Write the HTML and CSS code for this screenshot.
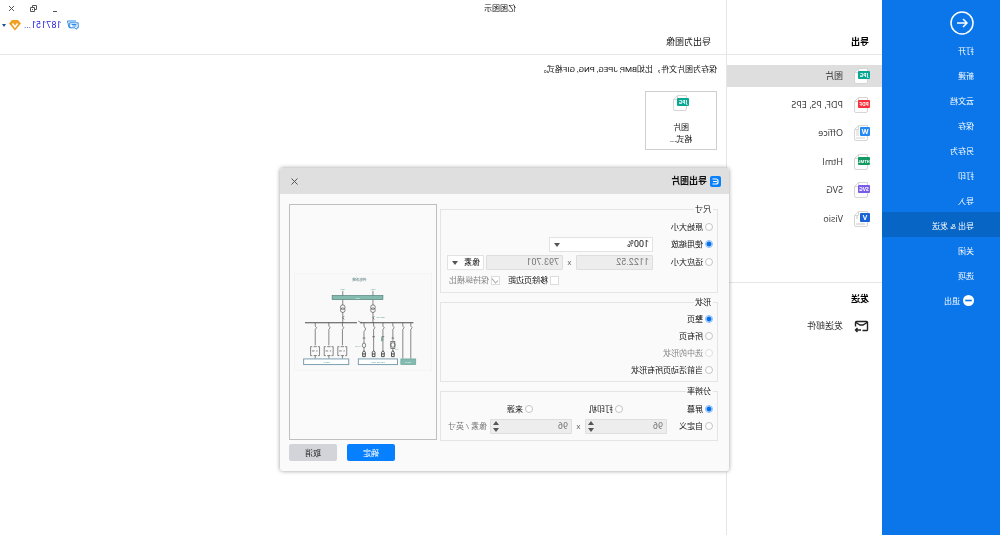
FILE: index.html
```html
<!DOCTYPE html>
<html lang="zh-CN">
<head>
<meta charset="utf-8">
<title>亿图图示</title>
<link rel="stylesheet" href="styles.css">
</head>
<body>
<svg class="defs" aria-hidden="true">
  <symbol id="page" viewBox="0 0 16 16">
    <path d="M2.500 .5h9l4 4v9.500a1.500 1.500 0 0 1-1.500 1.500H4a1.500 1.500 0 0 1-1.500-1.500z" fill="#fdfdfd" stroke="#d6d6d6"/>
    <path d="M11.500 .5v4h4" fill="none" stroke="#d6d6d6"/>
  </symbol>
</svg>
<div class="app">
  <nav class="sidebar">
    <button class="back" aria-label="返回"><svg viewBox="0 0 24 24"><circle cx="12" cy="12" r="11"/><path d="M17 12H7M11 8l-4 4 4 4"/></svg></button>
    <a class="menu" href="#">打开</a>
    <a class="menu" href="#">新建</a>
    <a class="menu" href="#">云文档</a>
    <a class="menu" href="#">保存</a>
    <a class="menu" href="#">另存为</a>
    <a class="menu" href="#">打印</a>
    <a class="menu" href="#">导入</a>
    <a class="menu current" href="#">导出 &amp; 发送</a>
    <a class="menu" href="#">关闭</a>
    <a class="menu" href="#">选项</a>
    <a class="menu" href="#"><svg class="exit" viewBox="0 0 10 10"><circle cx="5" cy="5" r="5" fill="#fff"/><path d="M2 5h6" stroke="#0a76ea" stroke-width="1.500"/></svg>退出</a>
  </nav>

  <section class="kinds">
    <h2 class="kinds-title">导出</h2>
    <div class="kind-list">
      <a class="kind selected" href="#"><svg viewBox="0 0 16 16"><use href="#page"/><rect y="3" width="12" height="8" rx="1" fill="#0aa793"/><text x="6" y="9">JPG</text></svg>图片</a>
      <a class="kind" href="#"><svg viewBox="0 0 16 16"><use href="#page"/><rect y="3" width="12" height="8" rx="1" fill="#fb2f38"/><text x="6" y="9">PDF</text></svg>PDF, PS, EPS</a>
      <a class="kind" href="#"><svg viewBox="0 0 16 16"><use href="#page"/><path d="M11 6h3M11 8h3M11 10h3M5 13h9" stroke="#d6d6d6"/><rect y="2" width="10" height="9" rx="1" fill="#2488f5"/><text class="big" x="5" y="9">W</text></svg>Office</a>
      <a class="kind" href="#"><svg viewBox="0 0 16 16"><use href="#page"/><rect y="3" width="12" height="8" rx="1" fill="#129a62"/><text class="tiny" x="6" y="9">HTML</text></svg>Html</a>
      <a class="kind" href="#"><svg viewBox="0 0 16 16"><use href="#page"/><rect y="3" width="12" height="8" rx="1" fill="#7a5bea"/><text x="6" y="9">SVG</text></svg>SVG</a>
      <a class="kind" href="#"><svg viewBox="0 0 16 16"><use href="#page"/><path d="M13 5v3M5 13h9" stroke="#c8c8c8"/><rect y="2" width="10" height="9" rx="1" fill="#1a62d6"/><text class="big" x="5" y="9">V</text></svg>Visio</a>
    </div>
    <h2 class="send-title">发送</h2>
    <a class="kind" href="#"><svg class="mail" viewBox="0 0 16 16"><path d="M7.500 12.500h-4a1 1 0 0 1-1-1v-7a1 1 0 0 1 1-1h10a1 1 0 0 1 1 1v4M3 4.500l4 2.500h3l4-2.500M9 12h5.500M12.500 10l2 2-2 2"/></svg>发送邮件</a>
  </section>

  <main class="main">
    <header class="main-head">
      <h1 class="main-title">导出为图像</h1>
      <div class="account">
        <svg class="chat" viewBox="0 0 12 10"><path d="M3 1h8.500L10 7.500H8M.8 2.800h8.500v5H4L2.500 9.300 2 7.800H.8zM2.500 4.500h5M2.500 6h4" /></svg>
        <a class="user" href="#">187151...</a>
        <svg class="vip" viewBox="0 0 12 12"><path d="M3 1h6l3 3.500L6 11.500 0 4.500z" fill="#f0a022"/><path d="M3.500 4.500L6 8l2.500-3.500" fill="none" stroke="#fff" stroke-width="1.500"/></svg>
        <span class="caret"></span>
      </div>
    </header>
    <div class="main-body">
      <p class="desc">保存为图片文件，比如BMP, JPEG, PNG, GIF格式。</p>
      <button class="card"><svg viewBox="0 0 16 16"><use href="#page"/><rect y="3" width="12" height="8" rx="1" fill="#0aa793"/><text x="6" y="9">JPG</text></svg><span>图片<br>格式...</span></button>
    </div>
  </main>

  <div class="window-bar">
    <span class="window-name">亿图图示</span>
    <div class="window-tools">
      <button aria-label="最小化"><svg viewBox="0 0 9 9"><path d="M3 7.500h4"/></svg></button>
      <button aria-label="还原"><svg viewBox="0 0 9 9"><path d="M3.500 3.500h4v4h-4zM5.500 3.500v-2h-4v4h2M5 5.500h1"/></svg></button>
      <button aria-label="关闭窗口"><svg viewBox="0 0 9 9"><path d="M2 2l5 5M7 2L2 7"/></svg></button>
    </div>
  </div>

  <form class="dialog" role="dialog" aria-labelledby="dlg-title">
    <header class="dialog-head">
      <svg class="logo" viewBox="0 0 11 11"><rect width="11" height="11" rx="2" fill="#0b80fb"/><path d="M8.500 3H5a2 2 0 0 0-2 2v1a2 2 0 0 0 2 2h3.500M4 5.500h4" fill="none" stroke="#fff" stroke-width="1.200"/></svg>
      <h2 id="dlg-title">导出图片</h2>
      <button type="button" class="close" aria-label="关闭"><svg viewBox="0 0 9 9"><path d="M1.500 1.500l6 6M7.500 1.500l-6 6"/></svg></button>
    </header>
    <div class="dialog-body">
      <div class="groups">
        <fieldset class="group size">
          <legend>尺寸</legend>
          <label class="opt"><input type="radio" name="size">原始大小</label>
          <div class="line">
            <label class="opt lead"><input type="radio" name="size" checked>使用缩放</label>
            <span class="pick zoom"><select aria-label="缩放"><option>100%</option></select></span>
          </div>
          <div class="line">
            <label class="opt lead"><input type="radio" name="size">适应大小</label>
            <input class="field" type="text" value="1122.52" aria-label="宽" disabled>
            <span class="times">x</span>
            <input class="field" type="text" value="793.701" aria-label="高" disabled>
            <span class="pick unit"><select aria-label="单位"><option>像素</option></select></span>
          </div>
          <div class="line checks">
            <label class="opt"><input type="checkbox">移除页边距</label>
            <label class="opt off"><input type="checkbox" checked disabled>保持纵横比</label>
          </div>
        </fieldset>
        <fieldset class="group shape">
          <legend>形状</legend>
          <label class="opt"><input type="radio" name="shape" checked>整页</label>
          <label class="opt"><input type="radio" name="shape">所有页</label>
          <label class="opt off"><input type="radio" name="shape" disabled>选中的形状</label>
          <label class="opt"><input type="radio" name="shape">当前活动页所有形状</label>
        </fieldset>
        <fieldset class="group dpi">
          <legend>分辨率</legend>
          <div class="thirds">
            <label class="opt"><input type="radio" name="dpi" checked>屏幕</label>
            <label class="opt"><input type="radio" name="dpi">打印机</label>
            <label class="opt"><input type="radio" name="dpi">来源</label>
          </div>
          <div class="line">
            <label class="opt custom"><input type="radio" name="dpi">自定义</label>
            <span class="spin"><input class="field" type="number" value="96" aria-label="水平分辨率" disabled></span>
            <span class="times">x</span>
            <span class="spin"><input class="field" type="number" value="96" aria-label="垂直分辨率" disabled></span>
            <span class="per">像素 / 英寸</span>
          </div>
        </fieldset>
      </div>
      <div class="side">
        <div class="preview">
          <svg viewBox="0 0 416 295">
            <rect x="1" y="1" width="414" height="293" fill="#f9f9f9" stroke="#f1f1f1" stroke-width="2"/>
            <text class="d-title" x="219" y="25">供电系统</text>
            <g class="d-label"><text x="177" y="51">10kV</text><text x="269" y="51">10kV</text><text x="154" y="137">400V/TT</text><text x="224" y="222">M-01</text><text x="107" y="231">M1</text></g>
            <g class="wire">
              <path d="M178 54v16M269 54v16M178 80v17M269 80v17M178 118v32M269 118v32"/>
              <circle cx="178" cy="103" r="7"/><circle cx="178" cy="112" r="7"/><circle cx="269" cy="103" r="7"/><circle cx="269" cy="112" r="7"/>
              <path d="M174 130l4 5-4 5M265 130l4 5-4 5"/>
              <path stroke-width="3" d="M56 150h158M226 150h157"/><path d="M214 150l8-5M214 147v6"/>
              <path d="M64 150v10l-4 5 4 5v88M88 150v10l-4 5 4 5v88M118 150v10l-4 5 4 5v34M148 150v10l-4 5 4 5v64M176 150v10l-4 5 4 5v64M205 150v10l-5 9 5 8v35"/>
              <path d="M270 150v10l-4 5 4 5v48M311 150v10l-4 5 4 5v48M352 150v10l-4 5 4 5v48"/>
              <rect x="112" y="206" width="12" height="22"/><circle cx="118" cy="217" r="7"/><path d="M118 228v7"/>
              <ellipse cx="205" cy="218" rx="5" ry="7"/><path d="M205 225v9M114 196h8M144 192h8M172 192h8M201 196h8"/>
              <g stroke-width="3"><path d="M114 252v-13l4-5 4 5v13zM144 252v-13l4-5 4 5v13zM172 252v-13l4-5 4 5v13zM201 252v-13l4-5 4 5v13zM114 244h8M144 244h8M172 244h8M201 244h8"/></g>
              <path d="M262 222h-5v27h5M279 222h5v27h-5M303 222h-5v27h5M320 222h5v27h-5M344 222h-5v27h5M361 222h5v27h-5M265 222h10M306 222h10M347 222h10M263 235h4M272 235h8M304 235h4M313 235h8M345 235h4M354 235h8M265 249h10M306 249h10M347 249h10M270 249v9M311 249v9M352 249v9"/>
            </g>
            <path d="M151 194v12" stroke="#35a69c" stroke-width="4"/><path d="M148 197v7" stroke="#d67662" stroke-width="2"/>
            <rect x="148" y="68" width="153" height="12" fill="#84bbb0" stroke="#4f7d74" stroke-width="2"/>
            <rect x="49" y="259" width="45" height="17" fill="#84bbb0" stroke="#6ba297" stroke-width="2"/>
            <rect x="104" y="259" width="118" height="17" fill="#fff" stroke="#7b9fb0" stroke-width="3"/>
            <rect x="251" y="259" width="136" height="17" fill="#fff" stroke="#7b9fb0" stroke-width="3"/>
            <g class="d-label"><text class="white" x="224" y="77">10kV</text><text class="white" x="72" y="270">LOAD</text><text x="163" y="271">POWER 400V</text><text x="317" y="271">LIGHT</text></g>
          </svg>
        </div>
        <div class="actions">
          <button type="button" class="btn primary">确定</button>
          <button type="button" class="btn">取消</button>
        </div>
      </div>
    </div>
  </form>
</div>
</body>
</html>
```
FILE: styles.css
```css
* { box-sizing: border-box; }
body {
  margin: 0;
  background: #fff;
  color: #111;
  font: 8px/12px "Open Sans", "Noto Sans CJK SC", sans-serif;
}
h1, h2, p { margin: 0; }
a { color: inherit; text-decoration: none; }
button, input, select { font: inherit; color: inherit; margin: 0; padding: 0; border: 0; background: none; }
svg { display: block; flex: none; }
.defs { position: absolute; width: 0; height: 0; }

/* The whole interface is shown flipped left to right. */
.app {
  position: relative;
  display: flex;
  min-height: 100vh;
  transform: scaleX(-1);
}

.sidebar { flex: none; width: 118px; background: #0a76ea; color: #fff; }
.back { display: block; margin: 11px 0 2px 26px; }
.back svg { width: 24px; height: 24px; fill: none; stroke: #fff; stroke-width: 1.500; }
.menu { display: flex; align-items: center; gap: 3px; height: 25px; padding: 2px 0 0 26px; }
.menu.current { background: #0765c5; }
.exit { width: 11px; height: 11px; }

.kinds { flex: none; width: 156px; border-right: 1px solid #e6e6e6; }
.kinds-title, .send-title { padding-left: 13px; font-size: 9px; line-height: 14px; font-weight: 700; color: #000; }
.kinds-title { height: 55px; padding-top: 35px; border-bottom: 1px solid #e6e6e6; margin-right: -1px; }
.kind-list { display: flex; flex-direction: column; justify-content: space-between; height: 165px; margin-top: 10px; }
.kind { display: flex; align-items: center; gap: 11px; height: 22px; padding-left: 12px; font-size: 9px; color: #333; }
.kind.selected { background: #dedede; }
.kind svg, .card svg { width: 16px; height: 16px; }
.kind text, .card text { font: 700 5px "Open Sans", sans-serif; fill: #fff; text-anchor: middle; }
.kind .big { font-size: 7px; }
.kind .tiny { font-size: 4px; }
.send-title { margin-top: 52px; padding-top: 9px; border-top: 1px solid #e6e6e6; }
.send-title + .kind { margin-top: 9px; }
.mail { fill: none; stroke: #222; stroke-width: 1.400; }

.main { flex: 1; }
.main-head { display: flex; justify-content: space-between; height: 55px; padding: 18px 2px 0 15px; border-bottom: 1px solid #e6e6e6; }
.main-title { padding-top: 17px; font-size: 9px; line-height: 14px; font-weight: 400; }
.account { display: flex; align-items: center; height: 14px; }
.chat { width: 12px; height: 10px; margin-right: 6px; fill: none; stroke: #2e8be6; }
.user { font: 9px/12px Roboto, sans-serif; color: #2a22e8; }
.vip { width: 12px; height: 12px; margin: 0 3px; }
.caret { border: 2px solid transparent; border-top: 3px solid #1c4f9c; border-bottom: 0; }
.main-body { padding: 9px; }
.desc { font-family: Roboto, "Noto Sans CJK SC", sans-serif; }
.card { display: flex; flex-direction: column; align-items: center; gap: 10px; width: 72px; height: 59px; margin-top: 15px; padding-top: 3px; border: 1px solid #cfcfcf; }

.window-bar { position: absolute; top: 0; left: 0; right: 0; display: grid; grid-template-columns: 1fr auto 1fr; padding: 2px 7px 0 7px; pointer-events: none; }
.window-name { grid-column: 2; }
.window-tools { display: flex; justify-content: flex-end; gap: 13px; }
.window-tools svg, .close svg { width: 9px; height: 9px; fill: none; stroke: #555; }

.dialog {
  position: absolute;
  top: 168px;
  left: 271px;
  width: 449px;
  border-radius: 3px;
  background: #fafafa;
  box-shadow: 0 0 4px rgba(0, 0, 0, .4);
  overflow: hidden;
}
.dialog-head { display: flex; align-items: center; gap: 3px; height: 26px; padding: 0 10px 0 8px; background: #dfdfdf; }
.dialog-head h2 { font-size: 9px; color: #111; }
.logo { width: 11px; height: 11px; }
.close { margin-left: auto; }
.dialog-body { display: flex; gap: 3px; padding: 9px 9px 10px 11px; }

.groups { flex: none; width: 278px; }
.group { margin: 0; padding: 0 0 0 4px; border: 1px solid #e4e4e4; min-width: 0; }
.group + .group { margin-top: 3px; }
legend { padding: 0 1px 0 2px; line-height: 12px; }
.size { height: 90px; }
.shape { height: 86px; padding-top: 2px; }
.shape .opt { height: 17px; }
.dpi { height: 56px; padding-top: 3px; }
.size > .opt { height: 20px; padding-top: 3px; }
.opt { display: flex; align-items: center; gap: 2px; white-space: nowrap; }
.off { color: #858585; }
.line { display: flex; align-items: center; height: 18px; }
.lead { width: 60px; }
.custom { width: 46px; }
input[type="radio"], input[type="checkbox"] { appearance: none; flex: none; width: 8px; height: 8px; border: 1px solid #c4c4c4; background: #fff; }
input[type="radio"] { border-radius: 50%; }
input[type="radio"]:checked { border-color: #8fc0f8; background: radial-gradient(circle, #0870e8 2px, #d8eafd 3px); }
input:disabled[type="radio"] { border-color: #dedede; }
input[type="checkbox"] { width: 9px; height: 9px; border-color: #dcdcdc; }
input[type="checkbox"]:checked { position: relative; }
input[type="checkbox"]:checked::after { content: ""; position: absolute; left: 2px; top: 0; width: 3px; height: 5px; border: solid #aaa; border-width: 0 1px 1px 0; transform: rotate(40deg); }
.field { width: 77px; height: 15px; padding: 0 3px; border: 1px solid #dedede; border-radius: 1px; background: #ededed; color: #777; font: 9px/13px Roboto, sans-serif; }
.times { width: 13px; text-align: center; color: #666; }
.pick { position: relative; height: 15px; border: 1px solid #e2e2e2; background: #fff; }
.pick select { appearance: none; display: block; width: 100%; height: 13px; padding-left: 3px; }
.pick::after { content: ""; position: absolute; right: 4px; top: 5px; border: 3px solid transparent; border-top: 4px solid #555; border-bottom: 0; }
.zoom { width: 104px; }
.zoom select { font: 9px/13px Roboto, sans-serif; }
.unit { width: 37px; margin-left: 2px; }
.checks { gap: 8px; padding-left: 154px; }
.thirds { display: grid; grid-template-columns: 90px 90px 1fr; height: 17px; }
.spin { position: relative; display: flex; }
.spin .field { width: 82px; appearance: textfield; }
.spin .field::-webkit-inner-spin-button { appearance: none; }
.spin::before, .spin::after { content: ""; position: absolute; right: 3px; border: 3px solid transparent; }
.spin::before { top: 2px; border-bottom: 4px solid #555; border-top: 0; }
.spin::after { bottom: 2px; border-top: 4px solid #555; border-bottom: 0; }
.per { margin-left: 3px; color: #777; white-space: nowrap; }

.side { flex: 1; padding-top: 1px; }
.preview { display: flex; align-items: center; height: 236px; padding: 0 4px; border: 1px solid #bfbfbf; }
.preview svg { width: 100%; }
.wire { fill: none; stroke: #4c4c4c; stroke-width: 2; }
.preview text { font-family: "Open Sans", "Noto Sans CJK SC", sans-serif; text-anchor: middle; }
.d-title { font-size: 11px; fill: #4f7474; }
.d-label { font-size: 7px; fill: #35928c; }
.d-label .white { fill: #fff; }
.actions { display: flex; justify-content: flex-end; gap: 10px; padding-top: 4px; }
.btn { width: 48px; height: 17px; border-radius: 2px; background: #d3d4d9; color: #222; }
.btn.primary { background: #0780ff; color: #fff; }
```
